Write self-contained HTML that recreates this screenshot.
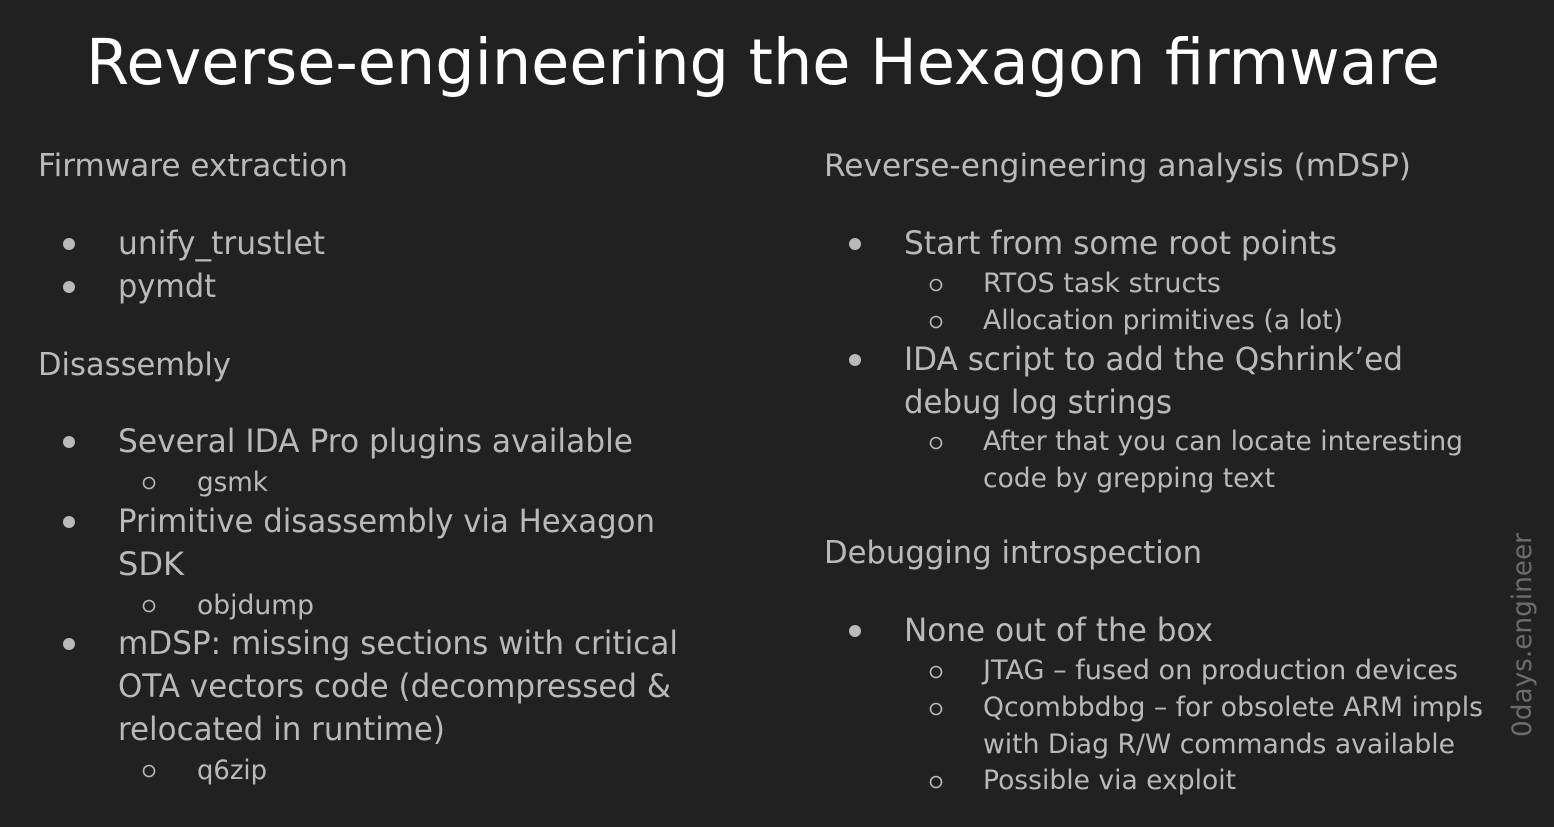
<!DOCTYPE html>
<html><head><meta charset="utf-8"><style>
html,body{margin:0;padding:0;background:#212121;width:1554px;height:827px;overflow:hidden}
svg{display:block}
text{font-family:"DejaVu Sans","Liberation Sans",sans-serif;fill:#b9b9b9}
.t{fill:#ffffff;font-size:63px}
.h{font-size:31px}
.m{font-size:32px}
.s{font-size:27px}
</style></head><body>
<svg width="1554" height="827" viewBox="0 0 1554 827" xmlns="http://www.w3.org/2000/svg">
<rect width="1554" height="827" fill="#212121"/>
<text class="t" x="86" y="84" textLength="1354" lengthAdjust="spacingAndGlyphs">Reverse-engineering the Hexagon firmware</text>

<g fill="#b9b9b9">
<circle cx="69" cy="244" r="6"/><circle cx="69" cy="287" r="6"/>
<circle cx="69" cy="442" r="6"/><circle cx="69" cy="522" r="6"/><circle cx="69" cy="644" r="6"/>
<circle cx="855" cy="244" r="6"/><circle cx="855" cy="360" r="6"/><circle cx="855" cy="631" r="6"/>
</g>
<g fill="none" stroke="#b9b9b9" stroke-width="1.6">
<circle cx="149" cy="483" r="5.5"/><circle cx="149" cy="606" r="5.5"/><circle cx="149" cy="771" r="5.5"/>
<circle cx="936" cy="285" r="5.5"/><circle cx="936" cy="322" r="5.5"/><circle cx="936" cy="443" r="5.5"/>
<circle cx="936" cy="672" r="5.5"/><circle cx="936" cy="709" r="5.5"/><circle cx="936" cy="782" r="5.5"/>
</g>

<text class="h" x="38" y="176" textLength="310" lengthAdjust="spacingAndGlyphs">Firmware extraction</text>
<text class="m" x="118" y="254" textLength="207" lengthAdjust="spacingAndGlyphs">unify_trustlet</text>
<text class="m" x="118" y="297" textLength="98" lengthAdjust="spacingAndGlyphs">pymdt</text>
<text class="h" x="38" y="375" textLength="193" lengthAdjust="spacingAndGlyphs">Disassembly</text>
<text class="m" x="118" y="452" textLength="515" lengthAdjust="spacingAndGlyphs">Several IDA Pro plugins available</text>
<text class="s" x="197" y="491" textLength="71" lengthAdjust="spacingAndGlyphs">gsmk</text>
<text class="m" x="118" y="532" textLength="537" lengthAdjust="spacingAndGlyphs">Primitive disassembly via Hexagon</text>
<text class="m" x="118" y="575" textLength="66" lengthAdjust="spacingAndGlyphs">SDK</text>
<text class="s" x="197" y="614" textLength="117" lengthAdjust="spacingAndGlyphs">objdump</text>
<text class="m" x="118" y="654" textLength="560" lengthAdjust="spacingAndGlyphs">mDSP: missing sections with critical</text>
<text class="m" x="118" y="697" textLength="553" lengthAdjust="spacingAndGlyphs">OTA vectors code (decompressed &amp;</text>
<text class="m" x="118" y="740" textLength="327" lengthAdjust="spacingAndGlyphs">relocated in runtime)</text>
<text class="s" x="197" y="779" textLength="70" lengthAdjust="spacingAndGlyphs">q6zip</text>

<text class="h" x="824" y="176" textLength="587" lengthAdjust="spacingAndGlyphs">Reverse-engineering analysis (mDSP)</text>
<text class="m" x="904" y="254" textLength="433" lengthAdjust="spacingAndGlyphs">Start from some root points</text>
<text class="s" x="983" y="292" textLength="238" lengthAdjust="spacingAndGlyphs">RTOS task structs</text>
<text class="s" x="983" y="329" textLength="360" lengthAdjust="spacingAndGlyphs">Allocation primitives (a lot)</text>
<text class="m" x="904" y="370" textLength="499" lengthAdjust="spacingAndGlyphs">IDA script to add the Qshrink’ed</text>
<text class="m" x="904" y="413" textLength="268" lengthAdjust="spacingAndGlyphs">debug log strings</text>
<text class="s" x="983" y="450" textLength="480" lengthAdjust="spacingAndGlyphs">After that you can locate interesting</text>
<text class="s" x="983" y="487" textLength="292" lengthAdjust="spacingAndGlyphs">code by grepping text</text>
<text class="h" x="824" y="563" textLength="378" lengthAdjust="spacingAndGlyphs">Debugging introspection</text>
<text class="m" x="904" y="641" textLength="309" lengthAdjust="spacingAndGlyphs">None out of the box</text>
<text class="s" x="983" y="679" textLength="475" lengthAdjust="spacingAndGlyphs">JTAG – fused on production devices</text>
<text class="s" x="983" y="716" textLength="500" lengthAdjust="spacingAndGlyphs">Qcombbdbg – for obsolete ARM impls</text>
<text class="s" x="983" y="753" textLength="472" lengthAdjust="spacingAndGlyphs">with Diag R/W commands available</text>
<text class="s" x="983" y="789" textLength="253" lengthAdjust="spacingAndGlyphs">Possible via exploit</text>

<text x="0" y="0" style="font-size:27px;fill:#6c6c6c" transform="translate(1531,737) rotate(-90)" textLength="204" lengthAdjust="spacingAndGlyphs">0days.engineer</text>
</svg>
</body></html>
